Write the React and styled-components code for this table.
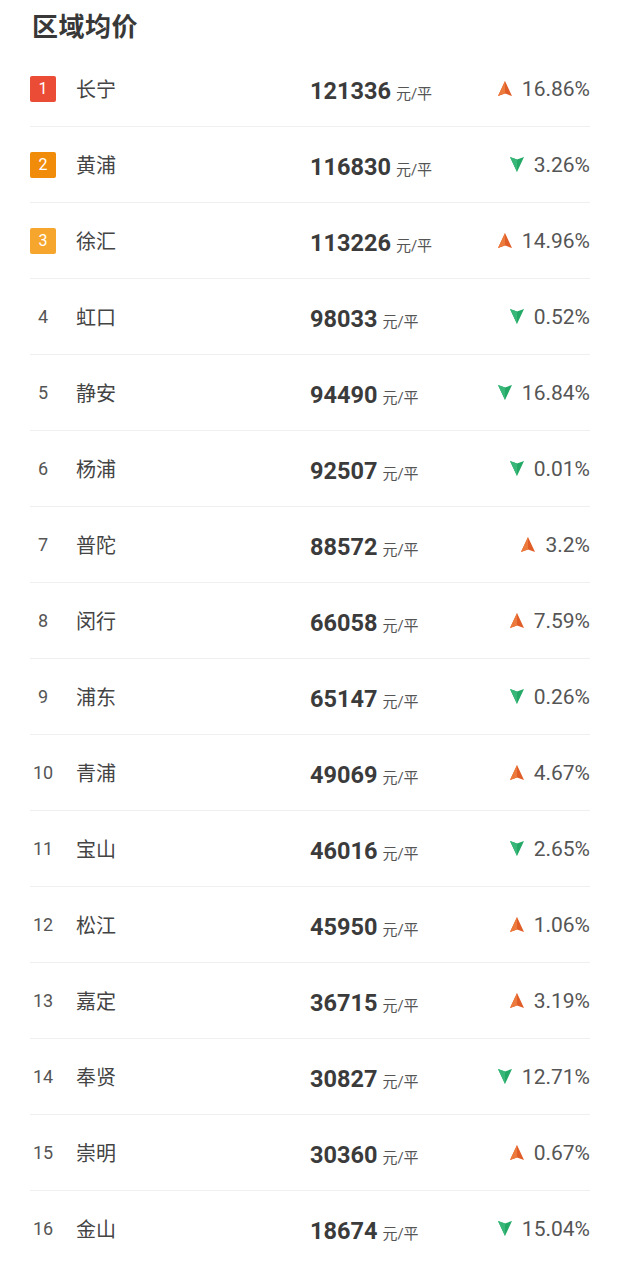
import styled, { createGlobalStyle } from "styled-components";

const GlobalStyle = createGlobalStyle`
  html, body {
    margin: 0;
    padding: 0;
    background: #fff;
  }
  body {
    font-family: Roboto, "Noto Sans CJK SC", sans-serif;
    -webkit-font-smoothing: antialiased;
  }
`;

const Page = styled.div`
  width: 620px;
  padding: 0 30px;
  box-sizing: border-box;
`;

const Title = styled.h1`
  margin: 0;
  height: 51px;
  display: flex;
  align-items: center;
  padding: 0 0 2px 2px;
  box-sizing: border-box;
  font-size: 26px;
  font-weight: 700;
  color: #383838;
  letter-spacing: 0.5px;
`;

const Row = styled.div`
  display: grid;
  grid-template-columns: 26px 254px 1fr auto;
  align-items: center;
  height: 75px;
  border-bottom: 1px solid ${({ $last }) => ($last ? "transparent" : "#efefef")};
`;

const badgeColors = { 1: "#ea4c36", 2: "#f18c0a", 3: "#f6a62c" };

const Rank = styled.div`
  width: 26px;
  height: 26px;
  display: flex;
  align-items: center;
  justify-content: center;
  border-radius: 2px;
  font-size: ${({ $top }) => ($top ? "16px" : "18px")};
  color: ${({ $top }) => ($top ? "#fff" : "#555")};
  background: ${({ $n }) => badgeColors[$n] || "transparent"};
  white-space: nowrap;
`;

const Name = styled.div`
  padding-left: 20px;
  font-size: 20px;
  color: #444;
`;

const Price = styled.div`
  display: flex;
  align-items: baseline;
  margin-top: 4px;
`;

const Amount = styled.span`
  font-size: 23.5px;
  font-weight: 700;
  color: #3b3b3b;
`;

const Unit = styled.span`
  margin-left: 5px;
  font-size: 15px;
  color: #555;
`;

const Change = styled.div`
  display: flex;
  align-items: center;
  gap: 10px;
  font-size: 21px;
  color: #555;
`;

const Arrow = ({ up }) =>
  up ? (
    <svg width="14" height="15" viewBox="0 0 14 15">
      <path d="M7 0 L14 15 L7 12.6 L0 15 Z" fill="#e05d28" />
      <path d="M7 0 L7 12.6 L0 15 Z" fill="#ec7a3c" />
    </svg>
  ) : (
    <svg width="14" height="15" viewBox="0 0 14 15">
      <path d="M0 0 L7 2.4 L14 0 L7 15 Z" fill="#23a866" />
      <path d="M0 0 L7 2.4 L7 15 Z" fill="#38b878" />
    </svg>
  );

const data = [
  ["长宁", "121336", true, "16.86%"],
  ["黄浦", "116830", false, "3.26%"],
  ["徐汇", "113226", true, "14.96%"],
  ["虹口", "98033", false, "0.52%"],
  ["静安", "94490", false, "16.84%"],
  ["杨浦", "92507", false, "0.01%"],
  ["普陀", "88572", true, "3.2%"],
  ["闵行", "66058", true, "7.59%"],
  ["浦东", "65147", false, "0.26%"],
  ["青浦", "49069", true, "4.67%"],
  ["宝山", "46016", false, "2.65%"],
  ["松江", "45950", true, "1.06%"],
  ["嘉定", "36715", true, "3.19%"],
  ["奉贤", "30827", false, "12.71%"],
  ["崇明", "30360", true, "0.67%"],
  ["金山", "18674", false, "15.04%"],
];

export default function App() {
  return (
    <>
      <GlobalStyle />
      <Page>
        <Title>区域均价</Title>
        {data.map(([name, price, up, pct], i) => (
          <Row key={name} $last={i === data.length - 1}>
            <Rank $n={i + 1} $top={i < 3}>
              {i + 1}
            </Rank>
            <Name>{name}</Name>
            <Price>
              <Amount>{price}</Amount>
              <Unit>元/平</Unit>
            </Price>
            <Change>
              <Arrow up={up} />
              {pct}
            </Change>
          </Row>
        ))}
      </Page>
    </>
  );
}
